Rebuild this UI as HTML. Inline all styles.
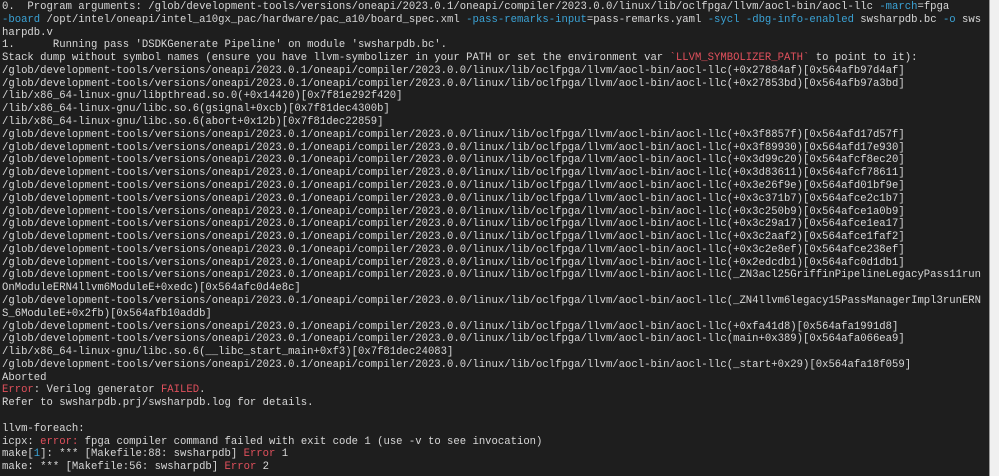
<!DOCTYPE html>
<html><head><meta charset="utf-8"><style>
html,body{margin:0;padding:0;background:#1e1e1e;width:999px;height:476px;overflow:hidden}
pre{position:absolute;left:2px;top:1px;margin:0;font-family:"Liberation Mono",monospace;font-size:10.6px;line-height:12.78px;color:#d8d8d8;white-space:pre}
.c{color:#3ba3d6}.r{color:#e0505c}
.sb{position:absolute;left:989px;top:0;width:10px;height:476px;background:#f0f0f0;border-left:1px solid #9a9a9a}
</style></head><body>
<pre>0.  Program arguments: /glob/development-tools/versions/oneapi/2023.0.1/oneapi/compiler/2023.0.0/linux/lib/oclfpga/llvm/aocl-bin/aocl-llc <span class="c">-march</span>=fpga
<span class="c">-board</span> /opt/intel/oneapi/intel_a10gx_pac/hardware/pac_a10/board_spec.xml <span class="c">-pass-remarks-input</span>=pass-remarks.yaml <span class="c">-sycl</span> <span class="c">-dbg-info-enabled</span> swsharpdb.bc <span class="c">-o</span> sws
harpdb.v
1.      Running pass 'DSDKGenerate Pipeline' on module 'swsharpdb.bc'.
Stack dump without symbol names (ensure you have llvm-symbolizer in your PATH or set the environment var <span class="r">`LLVM_SYMBOLIZER_PATH`</span> to point to it):
/glob/development-tools/versions/oneapi/2023.0.1/oneapi/compiler/2023.0.0/linux/lib/oclfpga/llvm/aocl-bin/aocl-llc(+0x27884af)[0x564afb97d4af]
/glob/development-tools/versions/oneapi/2023.0.1/oneapi/compiler/2023.0.0/linux/lib/oclfpga/llvm/aocl-bin/aocl-llc(+0x27853bd)[0x564afb97a3bd]
/lib/x86_64-linux-gnu/libpthread.so.0(+0x14420)[0x7f81e292f420]
/lib/x86_64-linux-gnu/libc.so.6(gsignal+0xcb)[0x7f81dec4300b]
/lib/x86_64-linux-gnu/libc.so.6(abort+0x12b)[0x7f81dec22859]
/glob/development-tools/versions/oneapi/2023.0.1/oneapi/compiler/2023.0.0/linux/lib/oclfpga/llvm/aocl-bin/aocl-llc(+0x3f8857f)[0x564afd17d57f]
/glob/development-tools/versions/oneapi/2023.0.1/oneapi/compiler/2023.0.0/linux/lib/oclfpga/llvm/aocl-bin/aocl-llc(+0x3f89930)[0x564afd17e930]
/glob/development-tools/versions/oneapi/2023.0.1/oneapi/compiler/2023.0.0/linux/lib/oclfpga/llvm/aocl-bin/aocl-llc(+0x3d99c20)[0x564afcf8ec20]
/glob/development-tools/versions/oneapi/2023.0.1/oneapi/compiler/2023.0.0/linux/lib/oclfpga/llvm/aocl-bin/aocl-llc(+0x3d83611)[0x564afcf78611]
/glob/development-tools/versions/oneapi/2023.0.1/oneapi/compiler/2023.0.0/linux/lib/oclfpga/llvm/aocl-bin/aocl-llc(+0x3e26f9e)[0x564afd01bf9e]
/glob/development-tools/versions/oneapi/2023.0.1/oneapi/compiler/2023.0.0/linux/lib/oclfpga/llvm/aocl-bin/aocl-llc(+0x3c371b7)[0x564afce2c1b7]
/glob/development-tools/versions/oneapi/2023.0.1/oneapi/compiler/2023.0.0/linux/lib/oclfpga/llvm/aocl-bin/aocl-llc(+0x3c250b9)[0x564afce1a0b9]
/glob/development-tools/versions/oneapi/2023.0.1/oneapi/compiler/2023.0.0/linux/lib/oclfpga/llvm/aocl-bin/aocl-llc(+0x3c29a17)[0x564afce1ea17]
/glob/development-tools/versions/oneapi/2023.0.1/oneapi/compiler/2023.0.0/linux/lib/oclfpga/llvm/aocl-bin/aocl-llc(+0x3c2aaf2)[0x564afce1faf2]
/glob/development-tools/versions/oneapi/2023.0.1/oneapi/compiler/2023.0.0/linux/lib/oclfpga/llvm/aocl-bin/aocl-llc(+0x3c2e8ef)[0x564afce238ef]
/glob/development-tools/versions/oneapi/2023.0.1/oneapi/compiler/2023.0.0/linux/lib/oclfpga/llvm/aocl-bin/aocl-llc(+0x2edcdb1)[0x564afc0d1db1]
/glob/development-tools/versions/oneapi/2023.0.1/oneapi/compiler/2023.0.0/linux/lib/oclfpga/llvm/aocl-bin/aocl-llc(_ZN3acl25GriffinPipelineLegacyPass11run
OnModuleERN4llvm6ModuleE+0xedc)[0x564afc0d4e8c]
/glob/development-tools/versions/oneapi/2023.0.1/oneapi/compiler/2023.0.0/linux/lib/oclfpga/llvm/aocl-bin/aocl-llc(_ZN4llvm6legacy15PassManagerImpl3runERN
S_6ModuleE+0x2fb)[0x564afb10addb]
/glob/development-tools/versions/oneapi/2023.0.1/oneapi/compiler/2023.0.0/linux/lib/oclfpga/llvm/aocl-bin/aocl-llc(+0xfa41d8)[0x564afa1991d8]
/glob/development-tools/versions/oneapi/2023.0.1/oneapi/compiler/2023.0.0/linux/lib/oclfpga/llvm/aocl-bin/aocl-llc(main+0x389)[0x564afa066ea9]
/lib/x86_64-linux-gnu/libc.so.6(__libc_start_main+0xf3)[0x7f81dec24083]
/glob/development-tools/versions/oneapi/2023.0.1/oneapi/compiler/2023.0.0/linux/lib/oclfpga/llvm/aocl-bin/aocl-llc(_start+0x29)[0x564afa18f059]
Aborted
<span class="r">Error</span>: Verilog generator <span class="r">FAILED</span>.
Refer to swsharpdb.prj/swsharpdb.log for details.

llvm-foreach:
icpx: <span class="r">error:</span> fpga compiler command failed with exit code 1 (use -v to see invocation)
make[<span class="c">1</span>]: *** [Makefile:88: swsharpdb] <span class="r">Error</span> 1
make: *** [Makefile:56: swsharpdb] <span class="r">Error</span> 2</pre>
<div class="sb"></div>
</body></html>
